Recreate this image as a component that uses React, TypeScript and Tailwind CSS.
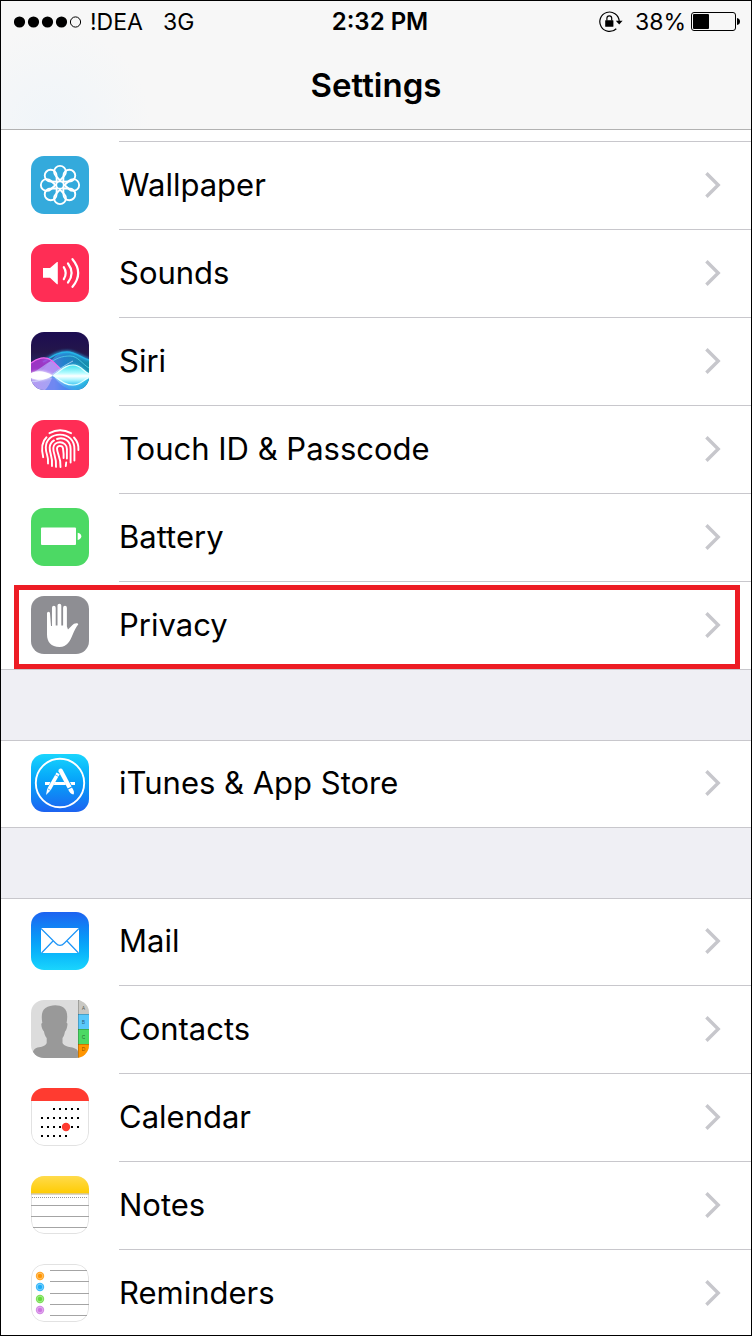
import type { ReactNode } from "react";

interface SettingsItem {
    label: string;
    icon: ReactNode;
    highlighted?: boolean;
}

function IconTile({ children, className = "" }: { children: ReactNode; className?: string }) {
    return (
        <svg viewBox="0 0 58 58" aria-hidden="true" className={`mb-0.5 size-[58px] shrink-0 rounded-[13px] ${className}`}>
            {children}
        </svg>
    );
}

function WallpaperIcon() {
    return (
        <IconTile className="bg-[#34aadc]">
            <g transform="translate(29 29)" fill="none" stroke="#fff" strokeWidth="1.9" strokeLinejoin="round">
                {[0, 45, 90, 135, 180, 225, 270, 315].map((angle) => (
                    <path key={angle} transform={`rotate(${angle})`} d="M0 -4.6L-4.2 -9.1A5.9 5.9 0 1 1 4.2 -9.1z" />
                ))}
                <circle r="3.8" />
            </g>
        </IconTile>
    );
}

function SoundsIcon() {
    return (
        <IconTile className="bg-[#ff2d55]">
            <path d="M12 24h7l7-6h.8v22.2H26l-7-6.5h-7z" fill="#fff" />
            <g fill="none" stroke="#fff" strokeWidth="2.2" strokeLinecap="round">
                <path d="M32.8 23.2q3.8 6 0 12" />
                <path d="M37 19.5q7.2 9.5 0 19" />
                <path d="M41.5 15.2q11.4 13.8 0 27.6" />
            </g>
        </IconTile>
    );
}

function SiriIcon() {
    return (
        <IconTile>
            <defs>
                <linearGradient id="siri-bg" x1="0" y1="0" x2="0" y2="1">
                    <stop offset="0" stopColor="#1c0d52" />
                    <stop offset="0.35" stopColor="#24164a" />
                    <stop offset="1" stopColor="#2a4f9e" />
                </linearGradient>
                <linearGradient id="siri-arch" x1="0" y1="0" x2="1" y2="0">
                    <stop offset="0" stopColor="#8f7cf5" />
                    <stop offset="0.5" stopColor="#2391e0" />
                    <stop offset="1" stopColor="#14a0b4" />
                </linearGradient>
                <linearGradient id="siri-low" x1="0" y1="0" x2="1" y2="0">
                    <stop offset="0" stopColor="#b59af2" />
                    <stop offset="0.4" stopColor="#a3a5f5" />
                    <stop offset="0.6" stopColor="#4a9cf2" />
                    <stop offset="1" stopColor="#22b4dc" />
                </linearGradient>
                <linearGradient id="siri-lens" x1="0" y1="0" x2="0" y2="1">
                    <stop offset="0" stopColor="#3fe0ee" />
                    <stop offset="0.4" stopColor="#b5fbff" />
                    <stop offset="0.55" stopColor="#fff" />
                    <stop offset="0.75" stopColor="#a8f4ff" />
                    <stop offset="1" stopColor="#3fc6f2" />
                </linearGradient>
                <filter id="siri-glow" x="-20%" y="-40%" width="140%" height="180%">
                    <feGaussianBlur stdDeviation="1.6" />
                </filter>
            </defs>
            <rect width="58" height="58" fill="url(#siri-bg)" />
            <path d="M0 43H58V58H0z" fill="url(#siri-low)" />
            <path d="M8 43C18 30 25 20 36 20S52 27 58 28V46H8z" fill="url(#siri-arch)" fillOpacity="0.85" />
            <path d="M12 30C22 24 27 20 36 20S52 27 58 28" fill="none" stroke="#29a9e8" strokeWidth="2.6" filter="url(#siri-glow)" />
            <path d="M12 30C22 24 27 20 36 20S52 27 58 28" fill="none" stroke="#25b4e8" strokeWidth="1.4" />
            <path d="M16 33C25 26 31 24 39 24S51 32 58 36" fill="none" stroke="#5ce0f0" strokeOpacity="0.7" />
            <path d="M0 31C6 26 14 24 20 28S27 38 32 43H0z" fill="#b93adc" fillOpacity="0.8" />
            <path d="M0 42C7 38 14 32 20 29C27 33 32 38 40 43z" fill="#b9b8ff" fillOpacity="0.65" />
            <path d="M0 31C6 26 14 24 20 28S30 40 38 46" fill="none" stroke="#f06af0" strokeWidth="1.3" />
            <path d="M22 43.5C28 52 34 57 42 58H14C19 53 20 48 22 43.5z" fill="#4f74ee" fillOpacity="0.6" />
            <path d="M0 50C10 49 16 46 22 42S32 34 42 29" fill="none" stroke="#d6e4ff" strokeOpacity="0.7" />
            <path d="M22 43.5C30 39 33 33 42 33S52 40 58 42V45C52 49 50 53 42 53S30 49 22 43.5z" fill="#5af0ff" filter="url(#siri-glow)" />
            <path d="M22 43.5C30 39 33 33 42 33S52 40 58 41.5V45.5C52 48 50 53 42 53S30 49 22 43.5z" fill="url(#siri-lens)" />
            <path d="M22 43.5C30 39 33 33 42 33S52 40 58 41.5M58 45.5C52 48 50 53 42 53S30 49 22 43.5" fill="none" stroke="#e6ffff" strokeWidth="1.2" />
            <path d="M0 41C6 38.5 12 38 22 43.5C14 49 6 48.5 0 46z" fill="#fff" filter="url(#siri-glow)" />
            <path d="M0 41C6 38.5 12 38 22 43.5C14 49 6 48.5 0 46z" fill="#fff" />
        </IconTile>
    );
}

function TouchIdIcon() {
    return (
        <IconTile className="bg-[#ff2d55]">
            <g fill="none" stroke="#fff" strokeWidth="1.9" strokeLinecap="round">
                <path d="M18.5 13.2Q29 7.4 40 13.2" />
                <path d="M15.5 17.3C11 21.5 10 28 12.2 37.2" />
                <path d="M43 17.5Q48 23 47.4 30" />
                <path d="M17 43.5C18 36 14.6 34 14.8 27.5C15 19.5 21 14.6 29 14.6S43.6 20 43.4 29V40.5" />
                <path d="M21 46C22 36 18.4 34 18.7 27.5C18.8 24.5 20.5 22 23 20.4" />
                <path d="M26 19C33 16.6 39.6 21 39.6 29V42.5" />
                <path d="M25 46.8C25.8 37 22 34 22.3 28C22.5 24.5 25.5 22.3 29 22.3S35.9 25 35.9 29V38.5" />
                <path d="M29.5 47C30 37 26 34 26 28.5C26.2 25 31.7 25 32 28.5C32.5 32 32.8 35 32.6 38" />
                <path d="M35.2 42.5L34.8 46" />
            </g>
        </IconTile>
    );
}

function BatteryIcon() {
    return (
        <IconTile className="bg-[#4cd964]">
            <rect x="10" y="19.5" width="35" height="17.5" rx="1" fill="#fff" />
            <path d="M46.7 24.7Q50.3 25.5 50.3 28.3T46.7 32z" fill="#fff" />
        </IconTile>
    );
}

function PrivacyIcon() {
    return (
        <IconTile className="bg-[#8e8e93]">
            <path
                d="M16 17.3a1.5 1.5 0 0 1 3 0L20 30h1V11.7a1.8 1.8 0 0 1 3.7 0V29.5h1.8V9.6a1.9 1.9 0 0 1 3.8 0V29.5h1.8V11.7a1.9 1.9 0 0 1 3.8 0V30.5L37 33.5C39 32 41 29 43 27.8S47.3 27.2 47.3 28.2C45 31 43.5 34.5 41.5 39C39 45 36 51 28.5 51C20 51 16 46 16 38.5z"
                fill="#fff"
            />
        </IconTile>
    );
}

function AppStoreIcon() {
    return (
        <IconTile className="bg-linear-to-b from-[#1ad5fd] to-[#1d62f0]">
            <circle cx="29" cy="29" r="24.2" fill="none" stroke="#fff" strokeWidth="1.9" />
            <path d="M14 28h5.5l-1.5 3H14zM24 28h9.5l1.5 3H22.5zM39 28H44v3h-3.5z" fill="#fff" />
            <path d="M25.5 18.5l3.2 1.8L19.5 36.5L15 41L16.2 34.8z" fill="#fff" />
            <path d="M27.5 17.2a2.2 2.2 0 0 1 4-1.7L40.5 32.5L36.7 34.5z" fill="#fff" />
            <path d="M37.2 35.5l3.8-2C43 36.5 43.5 39 42.5 40.5C40 40 38.5 38.5 37.2 35.5z" fill="#fff" />
            <path d="M24 20.6l3.6 2M16.5 34.7l3.4 1.9" stroke="#1e9bf8" strokeWidth="0.7" />
        </IconTile>
    );
}

function MailIcon() {
    return (
        <IconTile className="bg-linear-to-b from-[#1d62f0] to-[#1ad5fd]">
            <rect x="10" y="16" width="38" height="25" rx="0.5" fill="#fff" />
            <path d="M10 16.5L24.5 31Q29 35.8 33.5 31L48 16.5M10.5 41L22 29M47.5 41L36 29" fill="none" stroke="#1e95f7" strokeWidth="1.2" />
        </IconTile>
    );
}

function ContactsIcon() {
    const tabs = [
        { letter: "A", y: 0, color: "#c9c8c3" },
        { letter: "B", y: 14, color: "#5ac8fa" },
        { letter: "C", y: 29, color: "#4cd964" },
        { letter: "D", y: 44, color: "#ff9500" },
    ];

    return (
        <IconTile className="bg-[#dcdcdc]">
            <path
                d="M1 58C1 50 4 48 8 47.3C12 46.5 15 45.5 15.7 43V38C14 36 13.2 33.5 13 31.5C11.5 30 10.5 27.5 10.3 24.5C10.3 23.5 10.8 23 11.3 23C10 15 11 10.5 14.5 8C20 4.3 28 4.3 32.5 7.5C36.5 10.5 36.8 16 35.6 23C36.5 23 36.5 24 36.4 25C36 28 35.3 30.5 34 31.5C33.6 34 32.8 36.5 31.5 38V43C32.5 45.5 36 46.5 40 47.3C44 48 47 49.5 47 52V58z"
                fill="#999"
            />
            {tabs.map((tab) => (
                <g key={tab.letter}>
                    <rect x="47" y={tab.y} width="11" height="15" fill={tab.color} />
                    <path d={`M47 ${tab.y + 0.5}h11`} stroke="#000" strokeOpacity="0.2" />
                    <text
                        x="52.5"
                        y={tab.letter === "D" ? 51 : tab.y + 10}
                        textAnchor="middle"
                        fontSize="5"
                        fillOpacity="0.55"
                        className="font-['Inter',sans-serif]"
                    >
                        {tab.letter}
                    </text>
                </g>
            ))}
            <path d="M47.5 0v58" stroke="#000" strokeOpacity="0.2" />
        </IconTile>
    );
}

function CalendarIcon() {
    const weeks = [
        { y: 21, days: [23, 29, 35, 41, 47] },
        { y: 30, days: [11, 17, 23, 29, 35, 41, 47] },
        { y: 39, days: [11, 17, 23, 29, 35, 41, 47] },
        { y: 48, days: [11, 17, 23, 29, 35] },
    ];

    return (
        <IconTile className="bg-white">
            <rect x="0.5" y="0.5" width="57" height="57" rx="12.5" fill="none" stroke="#e2e2e2" />
            <path d="M0 0h58v13H0z" fill="#ff3b30" />
            {weeks.map((week) => week.days.map((x) => <rect key={`${x}-${week.y}`} x={x - 1} y={week.y - 1} width="2" height="2" />))}
            <circle cx="35" cy="39" r="4.2" fill="#ff3b30" />
        </IconTile>
    );
}

function NotesIcon() {
    return (
        <IconTile className="bg-white">
            <defs>
                <linearGradient id="notes-top" x1="0" y1="0" x2="0" y2="1">
                    <stop offset="0" stopColor="#ffdb4c" />
                    <stop offset="1" stopColor="#ffcc02" />
                </linearGradient>
            </defs>
            <rect x="0.5" y="0.5" width="57" height="57" rx="12.5" fill="none" stroke="#e2e2e2" />
            <path d="M0 0h58v17.5H0z" fill="url(#notes-top)" />
            <path d="M0 18h58" stroke="#b9ad8c" />
            <path d="M1 21.5h56" stroke="#999" strokeDasharray="1 1" />
            <path d="M0 29.5h58M0 40.5h58M2 51.5h54" stroke="#a4a4a4" />
        </IconTile>
    );
}

function RemindersIcon() {
    const bullets = [
        { y: 12, color: "#ff9500" },
        { y: 23, color: "#1badf8" },
        { y: 35, color: "#63da38" },
        { y: 46, color: "#cc73e1" },
    ];

    return (
        <IconTile className="bg-white">
            <rect x="0.5" y="0.5" width="57" height="57" rx="12.5" fill="none" stroke="#e2e2e2" />
            <path d="M19 6.5h37M19 17.5h39M19 29.5h39M19 40.5h39M19 51.5h37" stroke="#a4a4a4" />
            {bullets.map((bullet) => (
                <g key={bullet.color} fill={bullet.color}>
                    <circle cx="9" cy={bullet.y} r="4.2" fillOpacity="0.85" />
                    <circle cx="9" cy={bullet.y} r="2.8" fill="none" stroke="#fff" strokeWidth="0.5" strokeOpacity="0.6" />
                    <circle cx="9" cy={bullet.y} r="2" />
                </g>
            ))}
        </IconTile>
    );
}

function Chevron() {
    return (
        <svg viewBox="0 0 16 26" aria-hidden="true" className="h-[26px] w-4 shrink-0">
            <path d="M1.4 1.3L13.2 13L1.4 24.7" fill="none" stroke="#c7c7cc" strokeWidth="3.4" />
        </svg>
    );
}

function SettingsRow({ label, icon, highlighted }: SettingsItem) {
    return (
        <li className="group relative h-22 border-[#c8c7cc] first:-mt-px last:border-b">
            <a href="#" className="flex h-22 items-center gap-[30px] pl-[30px]">
                {icon}
                <span className="flex h-22 flex-1 items-center justify-between border-b border-[#c8c7cc] pr-[30px] pb-px group-last:border-transparent">
                    <span className="text-[31px] leading-10">{label}</span>
                    <Chevron />
                </span>
            </a>
            {highlighted && (
                <span className="pointer-events-none absolute top-[3px] right-[11px] bottom-0 left-[13px] border-5 border-[#ed1c24]" />
            )}
        </li>
    );
}

function StatusBar() {
    return (
        <div className="grid grid-cols-[1fr_auto_1fr] items-center pt-1.5 pl-2 text-[23px] leading-[30px]">
            <div className="flex items-center pl-[5px]">
                <svg viewBox="0 0 68 12" aria-label="Signal" className="mr-2 h-3 w-[68px]">
                    {[5.5, 19.5, 33.5, 47.5].map((x) => (
                        <circle key={x} cx={x} cy="6" r="5.6" />
                    ))}
                    <circle cx="61.5" cy="6" r="5.1" fill="none" stroke="#000" />
                </svg>
                <span className="mr-5">!DEA</span>
                <span>3G</span>
            </div>
            <span className="text-2xl leading-[30px] font-semibold">2:32 PM</span>
            <div className="flex items-center justify-end pr-[10px]">
                <svg viewBox="0 0 24 22" aria-label="Rotation lock" className="mr-3 h-[22px] w-6">
                    <path d="M20.2 10A9.7 9.7 0 1 0 17.3 17.7" fill="none" stroke="#000" strokeWidth="1.2" />
                    <path d="M16.8 9.8h6.8L20.2 13.5z" />
                    <rect x="6.2" y="9.3" width="8.2" height="6.4" rx="0.5" />
                    <path d="M7.9 9.5V7.2a2.4 2.4 0 0 1 4.8 0v2.3" fill="none" stroke="#000" strokeWidth="1.2" />
                </svg>
                <span className="mr-[5px]">38%</span>
                <svg viewBox="0 0 50 20" aria-label="Battery level" className="h-5 w-[50px]">
                    <rect x="0.5" y="0.5" width="44" height="18" rx="2.5" fill="none" stroke="#000" />
                    <rect x="2" y="2" width="16" height="15" rx="1" />
                    <path d="M46 6q3 .5 3 3.5t-3 3.5z" />
                </svg>
            </div>
        </div>
    );
}

const generalItems: SettingsItem[] = [
    { label: "Wallpaper", icon: <WallpaperIcon /> },
    { label: "Sounds", icon: <SoundsIcon /> },
    { label: "Siri", icon: <SiriIcon /> },
    { label: "Touch ID & Passcode", icon: <TouchIdIcon /> },
    { label: "Battery", icon: <BatteryIcon /> },
    { label: "Privacy", icon: <PrivacyIcon />, highlighted: true },
];

const storeItems: SettingsItem[] = [{ label: "iTunes & App Store", icon: <AppStoreIcon /> }];

const appItems: SettingsItem[] = [
    { label: "Mail", icon: <MailIcon /> },
    { label: "Contacts", icon: <ContactsIcon /> },
    { label: "Calendar", icon: <CalendarIcon /> },
    { label: "Notes", icon: <NotesIcon /> },
    { label: "Reminders", icon: <RemindersIcon /> },
];

export default function App() {
    return (
        <div className="flex h-screen flex-col overflow-hidden border border-black bg-[#efeff4] font-['Inter','Liberation_Sans',sans-serif] text-black">
            <header className="h-[129px] shrink-0 border-b border-[#b2b2b2] bg-[#f7f7f7] bg-radial-[circle_at_50px_125px] from-[#f0f5f9] to-[#f7f7f7] to-[100px]">
                <StatusBar />
                <h1 className="pt-7 text-center text-[33px] leading-10 font-semibold">Settings</h1>
            </header>
            <main className="flex flex-1 flex-col gap-[70px] overflow-y-auto [scrollbar-width:none]">
                <ul className="bg-white">
                    {/* tail of the row scrolled under the header */}
                    <li aria-hidden="true" className="ml-[118px] h-3 border-b border-[#c8c7cc]" />
                    {generalItems.map((item) => (
                        <SettingsRow key={item.label} {...item} />
                    ))}
                </ul>
                <ul className="border-t border-[#c8c7cc] bg-white">
                    {storeItems.map((item) => (
                        <SettingsRow key={item.label} {...item} />
                    ))}
                </ul>
                <ul className="border-t border-[#c8c7cc] bg-white">
                    {appItems.map((item) => (
                        <SettingsRow key={item.label} {...item} />
                    ))}
                </ul>
            </main>
        </div>
    );
}
